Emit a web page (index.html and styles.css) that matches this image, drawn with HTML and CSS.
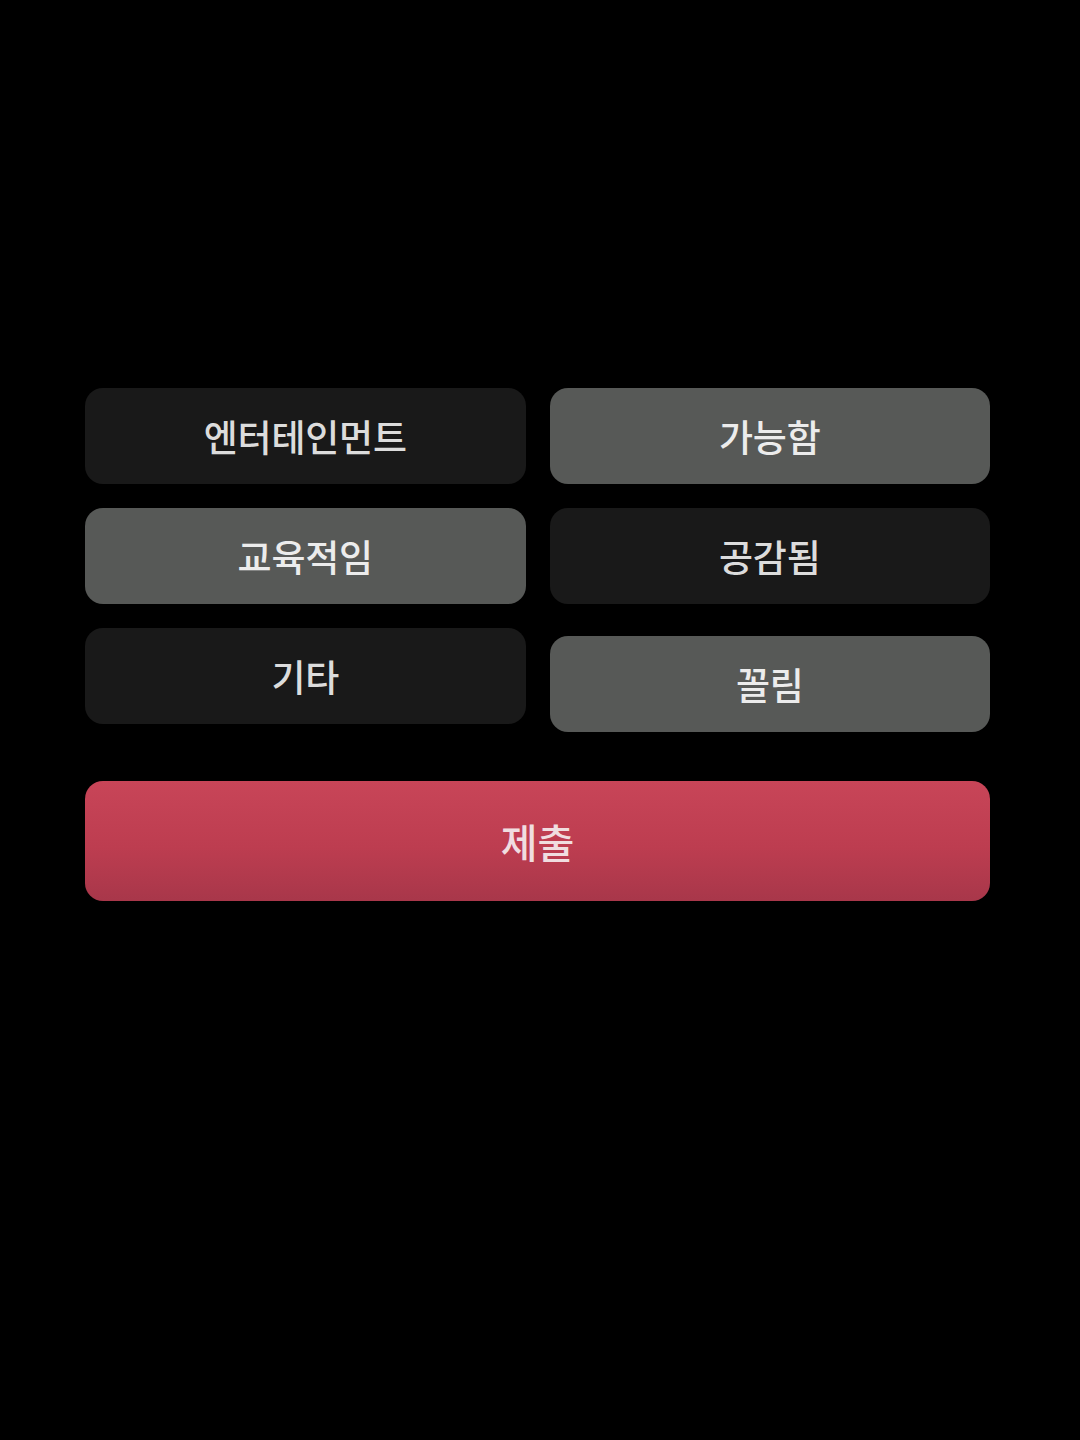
FILE: index.html
```html
<!DOCTYPE html>
<html lang="ko">
<head>
<meta charset="utf-8">
<link rel="stylesheet" href="styles.css">
</head>
<body>
<main class="panel">
  <div class="options">
    <button class="opt">엔터테인먼트</button>
    <button class="opt on">가능함</button>
    <button class="opt on">교육적임</button>
    <button class="opt">공감됨</button>
    <button class="opt">기타</button>
    <button class="opt on shift">꼴림</button>
  </div>
  <button class="submit">제출</button>
</main>
</body>
</html>
```
FILE: styles.css
```css
html, body {
  margin: 0;
  padding: 0;
  background: #000;
  width: 1080px;
  height: 1440px;
  font-family: "Noto Sans CJK KR", "Noto Sans", sans-serif;
}
.panel {
  padding: 388px 90px 0 85px;
  display: flex;
  flex-direction: column;
  gap: 57px;
}
.options {
  display: grid;
  grid-template-columns: 1fr 1fr;
  column-gap: 24px;
  row-gap: 24px;
}
.opt {
  height: 96px;
  border: none;
  border-radius: 18px;
  background: #191919;
  color: #dcdcdc;
  font-family: inherit;
  font-size: 37px;
  font-weight: 500;
  letter-spacing: -0.2px;
  padding: 0;
}
.opt.on {
  background: #575957;
  color: #ececec;
}
.opt.shift {
  margin-top: 8px;
  margin-bottom: -8px;
}
.submit {
  height: 120px;
  border: none;
  border-radius: 18px;
  background: linear-gradient(180deg, #c84558 0%, #bd3d50 55%, #a8374a 100%);
  color: #f0dde0;
  font-family: inherit;
  font-size: 40px;
  font-weight: 500;
  padding: 0;
}
```
